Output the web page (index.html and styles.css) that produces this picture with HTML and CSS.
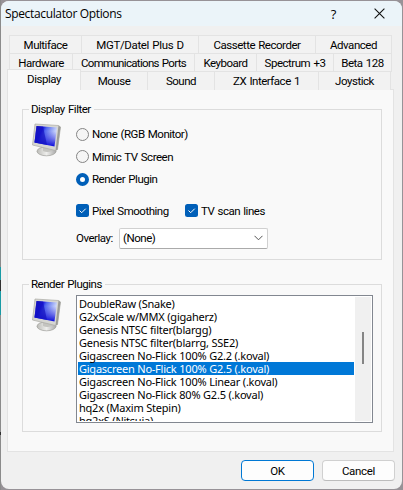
FILE: index.html
```
<!DOCTYPE html>
<html lang="en">
<head>
<meta charset="utf-8">
<title>Spectaculator Options</title>
<link rel="stylesheet" href="styles.css">
</head>
<body>
<svg class="defs" width="0" height="0">
  <defs>
    <linearGradient id="screen" x1="0" y1="0" x2="1" y2="0.45"><stop offset="0" stop-color="#1714c0"/><stop offset=".35" stop-color="#1b1be0"/><stop offset=".48" stop-color="#5268ee"/><stop offset="1" stop-color="#edf5ff"/></linearGradient>
    <linearGradient id="shade" x1="0" y1="0" x2="0" y2="1"><stop offset=".25" stop-color="#0808d8" stop-opacity="0"/><stop offset="1" stop-color="#0808d8"/></linearGradient>
    <linearGradient id="base" x1="0" y1="0" x2="1" y2="0"><stop offset="0" stop-color="#bcbcb8"/><stop offset=".5" stop-color="#eeeeec"/><stop offset="1" stop-color="#aaa"/></linearGradient>
    <symbol id="monitor" viewBox="0 0 30 34">
      <ellipse cx="14.5" cy="28.3" rx="9.5" ry="4.5" fill="url(#base)" stroke="#a0a09c" stroke-width=".7"/>
      <path d="M11 22l8 1 1 5q-5 2-9 0z" fill="#c4c4c0"/>
      <path d="M3 1L26.500 2.500 28.500 4 25.500 26.500 23.500 27.500 .5 22z" fill="#d6d6d2" stroke="#aaaaa5" stroke-width=".7"/>
      <path d="M26.500 2.500l2 1.500-3 22.500-2 1z" fill="#9b9b97"/>
      <path d="M4.500 3L25 4.500 22.500 23.500 2.500 19.500z" fill="url(#screen)"/>
      <path d="M4.500 3L25 4.500 22.500 23.500 2.500 19.500z" fill="url(#shade)"/>
      <path d="M4.500 3L11 3.500 15 22 2.500 19.500z" fill="#1210bd" opacity=".65"/>
    </symbol>
  </defs>
</svg>
<main class="window">
  <header class="titlebar">
    <h1>Spectaculator Options</h1>
    <span class="help">?</span>
    <svg class="close" width="11" height="11" viewBox="0 0 11 11"><path d="M.6.6l9.800 9.800M10.400.6L.6 10.400"/></svg>
  </header>
  <nav class="tabs">
    <div class="row row1"><span class="tab">Multiface</span><span class="tab loose">MGT/Datel Plus D</span><span class="tab">Cassette Recorder</span><span class="tab">Advanced</span></div>
    <div class="row row2"><span class="tab">Hardware</span><span class="tab tight">Communications Ports</span><span class="tab">Keyboard</span><span class="tab">Spectrum +3</span><span class="tab">Beta 128</span></div>
    <div class="row row3"><span class="tab selected">Display</span><span class="tab">Mouse</span><span class="tab">Sound</span><span class="tab">ZX Interface 1</span><span class="tab">Joystick</span></div>
  </nav>
  <section class="panel">
    <fieldset class="group filter">
      <legend>Display Filter</legend>
      <svg class="monitor"><use href="#monitor"/></svg>
      <div class="controls">
        <div class="option"><i class="radio"></i><span>None (RGB Monitor)</span></div>
        <div class="option"><i class="radio"></i><span>Mimic TV Screen</span></div>
        <div class="option"><i class="radio on"></i><span>Render Plugin</span></div>
        <div class="checks">
          <div class="check"><svg width="13" height="13"><rect width="13" height="13" rx="2.500"/><path d="M3.500 6.500l2.200 2.200 4-4"/></svg><span>Pixel Smoothing</span></div>
          <div class="check"><svg width="13" height="13"><rect width="13" height="13" rx="2.500"/><path d="M3.500 6.500l2.200 2.200 4-4"/></svg><span>TV scan lines</span></div>
        </div>
        <div class="overlay"><label>Overlay:</label><div class="combo"><span>(None)</span><svg width="9" height="6" viewBox="0 0 9 6"><path d="M.5.8l4 4 4-4"/></svg></div></div>
      </div>
    </fieldset>
    <fieldset class="group plugins">
      <legend>Render Plugins</legend>
      <svg class="monitor"><use href="#monitor"/></svg>
      <div class="listbox">
        <ul>
          <li>DoubleRaw (Snake)</li>
          <li>G2xScale w/MMX (gigaherz)</li>
          <li>Genesis NTSC filter(blargg)</li>
          <li>Genesis NTSC filter(blarrg, SSE2)</li>
          <li>Gigascreen No-Flick 100% G2.2 (.koval)</li>
          <li class="active">Gigascreen No-Flick 100% G2.5 (.koval)</li>
          <li>Gigascreen No-Flick 100% Linear (.koval)</li>
          <li>Gigascreen No-Flick 80% G2.5 (.koval)</li>
          <li>hq2x (Maxim Stepin)</li>
          <li>hq2xS (Nitsuja)</li>
        </ul>
        <div class="scrollbar"><i></i></div>
      </div>
    </fieldset>
  </section>
  <footer><button class="ok">OK</button><button>Cancel</button></footer>
</main>
</body>
</html>
```
FILE: styles.css
```
* { box-sizing: border-box; }
body { margin: 0; width: 403px; height: 490px; overflow: hidden; padding: 1px; background: linear-gradient(#8b8b8b 0 267px, #189aa5 267px 280px, #303030 280px 291px, #189aa5 291px 315px, #8b8b8b 315px 432px, #303030 432px 435px, #8b8b8b 435px) 0 0 / 1px 490px no-repeat #979297; font: 11.5px/14px Roboto, "Liberation Sans", sans-serif; letter-spacing: -.48px; word-spacing: .8px; color: #000; }
.defs { position: absolute; }
.window { height: 488px; border-radius: 8px; background: #f0f0f0; overflow: hidden; }
.titlebar { height: 25px; display: flex; align-items: center; background: #ebf4f9; padding: 0 17px 0 4px; }
h1 { margin: 0; flex: 1; font: 12px/16px "Open Sans", sans-serif; letter-spacing: -.35px; word-spacing: 0; padding-top: 1px; }
.help { font: 13px/16px "Open Sans", sans-serif; margin-right: 38px; }
.close { fill: none; stroke: #111; stroke-width: 1.1; }
.tabs { padding-top: 9px; height: 63px; position: relative; z-index: 1; }
.row { display: grid; height: 18px; margin: 0 10px 0 8px; border-left: 1px solid #e3e3e3; }
.row1 { grid-template-columns: 72px 117px 117px 76px; }
.row2 { grid-template-columns: 63px 122px 62px 77px 58px; }
.row3 { grid-template-columns: 74px 67px 67px 104px 72px; margin-left: 6px; border-left: 0; }
.tab { background: #f2f2f2; border-top: 1px solid #e3e3e3; border-right: 1px solid #e3e3e3; text-align: center; line-height: 18px; white-space: nowrap; }
.tight { letter-spacing: -.68px; }
.loose { letter-spacing: -.35px; }
.selected { height: 21px; margin-top: -2px; background: #f9f9f9; border-left: 1px solid #e3e3e3; }
.panel { width: 387px; height: 363px; margin-left: 6px; padding: 18px 12px 0 14px; border: 1px solid #e3e3e3; background: #f9f9f9; }
.group { margin: 0; min-width: 0; border: 1px solid #dcdcdc; width: 360px; padding: 0; display: grid; grid-template-columns: 53px 1fr; }
legend { height: 14px; line-height: 14px; margin-left: 6px; padding: 0 3px 0 2px; white-space: nowrap; }
.filter { height: 158px; margin-top: -6px; }
.monitor { width: 30px; height: 34px; margin: 7px 0 0 9px; }
.controls { padding-top: 7px; }
.option { height: 22.500px; display: flex; align-items: center; gap: 3px; white-space: nowrap; }
.radio { width: 13px; height: 13px; border: 1px solid #858585; border-radius: 50%; background: #f5f5f5; }
.radio.on { border: 4px solid #005fb8; background: #fff; }
.checks { display: flex; margin-top: 7px; height: 26px; align-items: center; }
.check { width: 109px; display: flex; align-items: center; gap: 3px; white-space: nowrap; }
.check rect { fill: #005fb8; }
.check path { fill: none; stroke: #fff; stroke-width: 1; }
.overlay { display: flex; align-items: center; margin-top: 4px; }
.overlay label { width: 43px; }
.combo { width: 149px; height: 21px; border: 1px solid #d0d0d0; border-bottom-color: #aaa; border-radius: 2px; background: #fff; display: flex; align-items: center; justify-content: space-between; padding: 0 4px 0 3px; }
.combo path { fill: none; stroke: #555; stroke-width: 1; }
.plugins { height: 155px; margin-top: 17px; }
.listbox { width: 297px; height: 128px; margin-top: 4px; border: 1px solid #828790; padding: 1px; background: #fff; display: flex; }
ul { list-style: none; padding: 0; margin: 0; width: 276px; height: 124px; overflow: hidden; font: 11px/13px "Noto Sans", sans-serif; letter-spacing: -.24px; word-spacing: .2px; }
li { height: 13px; padding-left: 1px; white-space: nowrap; }
.active { background: #0078d7; color: #fff; }
.scrollbar { width: 16px; margin-left: 1px; background: #f0f0f0; padding: 35px 0 0 7px; }
.scrollbar i { display: block; width: 2px; height: 32px; background: #858585; }
footer { display: flex; gap: 8px; margin-top: 8px; padding-left: 240px; }
button { width: 73px; height: 21px; padding: 0; border: 1px solid #d0d0d0; border-bottom-color: #bcbcbc; border-radius: 4px; background: #fdfdfd; color: #000; font: inherit; letter-spacing: -.3px; }
button.ok { border: 1px solid #0078d4; }
```
